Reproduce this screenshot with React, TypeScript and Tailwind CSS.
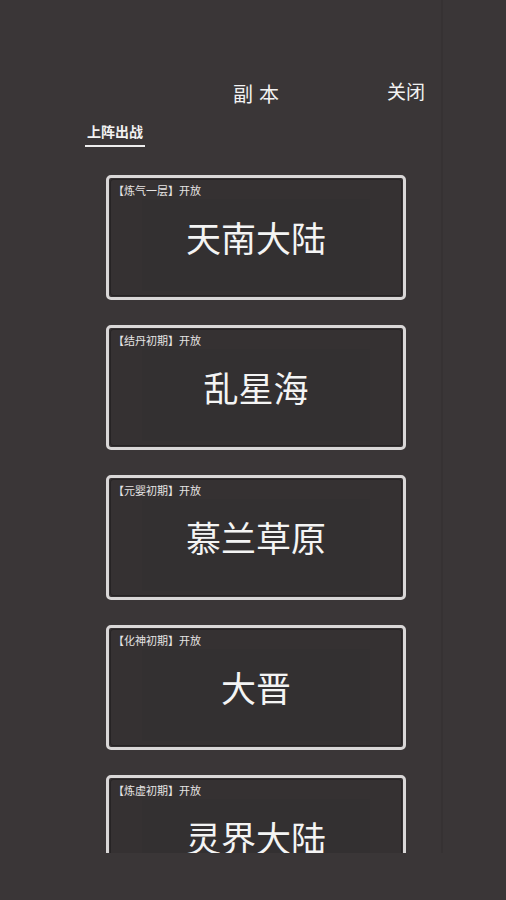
import React from 'react';

const font = { fontFamily: '"Noto Sans CJK SC", "Noto Sans", sans-serif' };

const stages = [
  { level: '炼气一层', name: '天南大陆' },
  { level: '结丹初期', name: '乱星海' },
  { level: '元婴初期', name: '慕兰草原' },
  { level: '化神初期', name: '大晋' },
  { level: '炼虚初期', name: '灵界大陆' },
];

const StageCard = ({ level, name }: { level: string; name: string }) => (
  <div className="shrink-0 w-[300px] h-[125px] rounded-[5px] border-[3px] border-[#d9d7d7] bg-[#343031] p-[1px]">
    <div className="relative h-full w-full rounded-[3px] border border-[#262324] bg-[#353132] flex items-center justify-center">
      <span className="absolute left-[2px] top-[3px] text-[11px] leading-[14px] text-[#e6e4e4]">
        【{level}】开放
      </span>
      <div className="w-[228px] h-[92px] mt-[14px] bg-[#333031] flex items-center justify-center">
        <span className="text-[35px] leading-none text-[#f4f4f4] -mt-[16px]">{name}</span>
      </div>
    </div>
  </div>
);

export default function App() {
  return (
    <div className="w-[506px] h-[900px] bg-[#3a3637] overflow-hidden" style={font}>
      <div className="w-[443px] h-[853px] border-r-2 border-[#363233] flex flex-col">
        <div className="relative h-[118px] w-[506px] pt-[80px]">
          <div className="text-center text-[20px] leading-[28px] text-[#f2f2f2] tracking-[6px] pl-[12px]">副本</div>
          <span className="absolute left-[387px] top-[78px] text-[19px] leading-[26px] text-[#f2f2f2]">关闭</span>
        </div>
        <div className="pl-[85px] h-[57px]">
          <span className="inline-block text-[14px] leading-[20px] font-bold text-[#f2f2f2] border-b-2 border-[#eeeeee] pb-[4px] px-[2px]">
            上阵出战
          </span>
        </div>
        <div className="flex-1 overflow-hidden pl-[106px] flex flex-col gap-[25px]">
          {stages.map((s) => (
            <StageCard key={s.name} level={s.level} name={s.name} />
          ))}
        </div>
      </div>
    </div>
  );
}
